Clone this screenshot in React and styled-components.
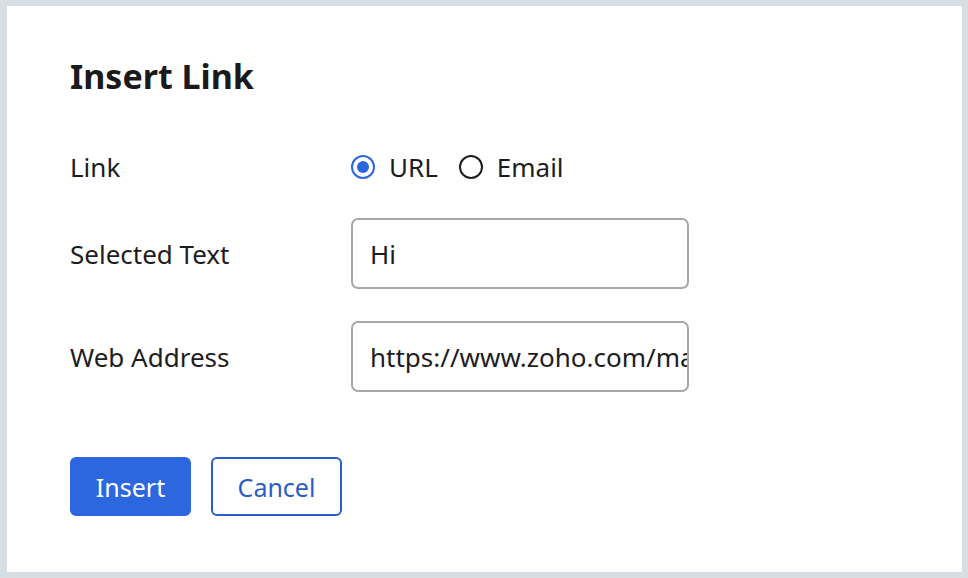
import styled, { createGlobalStyle } from "styled-components";

const Global = createGlobalStyle`
  html, body {
    margin: 0;
    padding: 0;
    background: #d7dfe4;
  }
  body {
    font-family: "Noto Sans", "Open Sans", sans-serif;
    color: #1d1d1f;
  }
`;

const Screen = styled.div`
  width: 968px;
  height: 578px;
  padding: 6px 6px 6px 7px;
  box-sizing: border-box;
`;

const Dialog = styled.div`
  background: #fff;
  height: 100%;
  box-sizing: border-box;
  padding: 48px 63px 0 63px;
`;

const Title = styled.h1`
  margin: 0 0 50px 0;
  font-size: 34px;
  font-weight: 700;
  line-height: 44px;
  color: #1a1a1c;
`;

const Form = styled.div`
  display: grid;
  grid-template-columns: 281px 338px;
  row-gap: 32px;
  align-items: center;
`;

const Label = styled.div`
  font-size: 26px;
  line-height: 32px;
`;

const RadioGroup = styled.div`
  display: flex;
  align-items: center;
  gap: 21px;
  height: 38px;
`;

const Option = styled.label`
  display: flex;
  align-items: center;
  gap: 14px;
  font-size: 26px;
`;

const Dot = styled.span`
  width: 24px;
  height: 24px;
  box-sizing: border-box;
  border-radius: 50%;
  border: 2px solid ${(p) => (p.$on ? "#2c66dd" : "#1d1d1f")};
  display: flex;
  align-items: center;
  justify-content: center;
  &::after {
    content: "";
    width: 12px;
    height: 12px;
    border-radius: 50%;
    background: ${(p) => (p.$on ? "#2c66dd" : "transparent")};
  }
`;

const Field = styled.div`
  height: 71px;
  box-sizing: border-box;
  border: 2px solid #a7a7aa;
  border-radius: 7px;
  padding: 0 0 0 17px;
  display: flex;
  align-items: center;
  font-size: 26px;
  white-space: nowrap;
  overflow: hidden;
`;

const Actions = styled.div`
  display: flex;
  gap: 20px;
  margin-top: 65px;
`;

const Button = styled.button`
  height: 59px;
  width: ${(p) => (p.$primary ? "121px" : "131px")};
  box-sizing: border-box;
  padding: 0;
  border-radius: 6px;
  font-family: inherit;
  font-size: 25px;
  border: 2px solid ${(p) => (p.$primary ? "#2d67df" : "#2a5ec6")};
  background: ${(p) => (p.$primary ? "#2d67df" : "#fff")};
  color: ${(p) => (p.$primary ? "#fff" : "#2a5ec6")};
`;

export default function App() {
  return (
    <>
      <Global />
      <Screen>
        <Dialog>
          <Title>Insert Link</Title>
          <Form>
            <Label>Link</Label>
            <RadioGroup>
              <Option>
                <Dot $on />
                URL
              </Option>
              <Option>
                <Dot />
                Email
              </Option>
            </RadioGroup>
            <Label>Selected Text</Label>
            <Field>Hi</Field>
            <Label>Web Address</Label>
            <Field>https://www.zoho.com/mail</Field>
          </Form>
          <Actions>
            <Button $primary>Insert</Button>
            <Button>Cancel</Button>
          </Actions>
        </Dialog>
      </Screen>
    </>
  );
}
